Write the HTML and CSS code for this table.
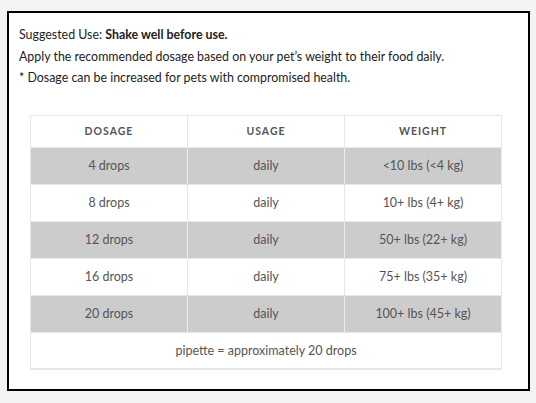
FILE: index.html
```html
<!DOCTYPE html>
<html>
<head>
  <meta charset="utf-8" />
  <title>Suggested Use</title>
  <meta name="viewport" content="width=device-width, initial-scale=1">
  <link rel="stylesheet" href="styles.css">
</head>
<body>
  <div class="box">
    <div class="notes">
      <p>Suggested Use: <strong>Shake well before use.</strong></p>
      <p>Apply the recommended dosage based on your pet’s weight to their food daily.</p>
      <p>* Dosage can be increased for pets with compromised health.</p>
    </div>
    <table class="dosage">
      <thead>
        <tr><th>Dosage</th><th>Usage</th><th>Weight</th></tr>
      </thead>
      <tbody>
        <tr class="shade"><td>4 drops</td><td>daily</td><td>&lt;10 lbs (&lt;4 kg)</td></tr>
        <tr><td>8 drops</td><td>daily</td><td>10+ lbs (4+ kg)</td></tr>
        <tr class="shade"><td>12 drops</td><td>daily</td><td>50+ lbs (22+ kg)</td></tr>
        <tr><td>16 drops</td><td>daily</td><td>75+ lbs (35+ kg)</td></tr>
        <tr class="shade"><td>20 drops</td><td>daily</td><td>100+ lbs (45+ kg)</td></tr>
        <tr><td colspan="3">pipette = approximately 20 drops</td></tr>
      </tbody>
    </table>
  </div>
</body>
</html>
```
FILE: styles.css
```css
* { margin: 0; padding: 0; box-sizing: border-box; font-family: Lato, 'Open Sans', sans-serif; }
body { background: #f3f3f3; padding: 11px 6px 12px 7px; }
.box { background: #fff; border: 2px solid #000; height: 380px; padding: 11px 10px 0 10px; }
.notes { font-size: 12.4px; color: #222; line-height: 21.5px; }
.notes strong { font-weight: 700; }
.dosage { margin: 26px 0 0 11px; width: 472px; border-collapse: collapse; table-layout: fixed; border: 1px solid #e6e6e6; border-bottom-width: 2px; }
.dosage th, .dosage td { text-align: center; color: #555; border-right: 1px solid #e6e6e6; border-bottom: 1px solid #e6e6e6; }
.dosage th { height: 32px; font-size: 10.5px; font-weight: 700; letter-spacing: 1px; text-transform: uppercase; }
.dosage td { height: 37px; font-size: 12.5px; }
.shade td { background: #ccc; border-right-color: #eee; }
```
